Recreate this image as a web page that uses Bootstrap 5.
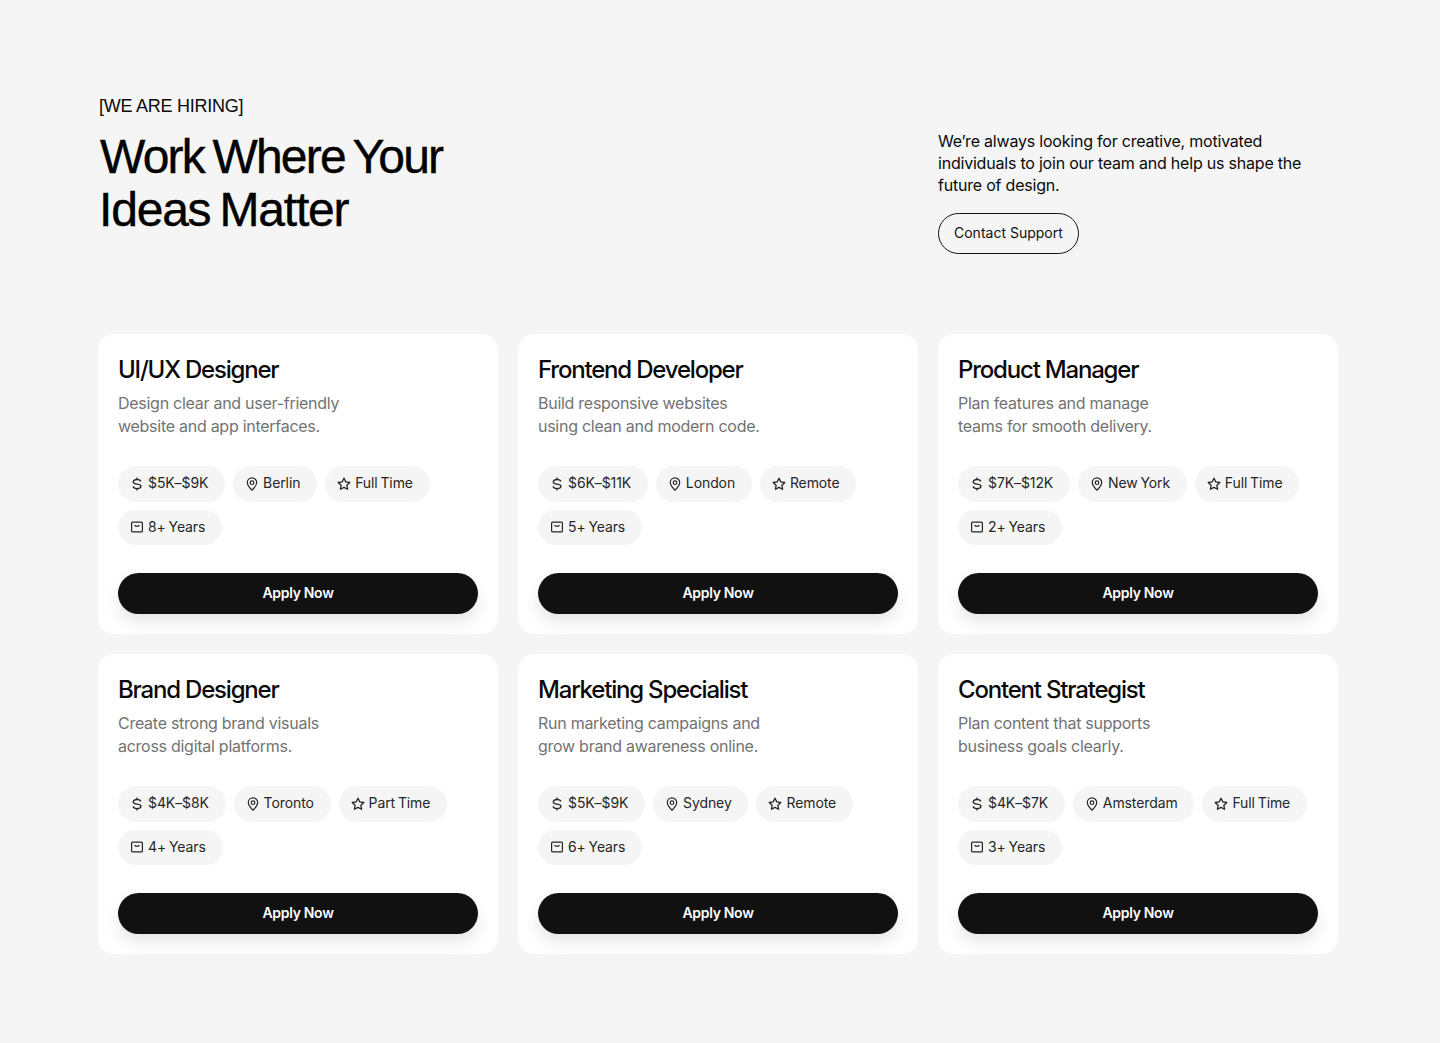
<!DOCTYPE html>
<html lang="en">
<head>
  <meta charset="UTF-8" />
  <meta name="viewport" content="width=device-width, initial-scale=1" />
  <title>Careers</title>
  <link href="https://cdn.jsdelivr.net/npm/bootstrap@5.3.3/dist/css/bootstrap.min.css" rel="stylesheet">
  <style>
    body {
      background-color: #f5f5f5;
      color: #0a0a0a;
      font-family: 'Inter', sans-serif;
    }

    .page-wrap {
      width: 1240px;
      margin-left: 98px;
      padding-top: 95px;
      padding-bottom: 89px;
    }

    .hero-row {
      height: 239px;
    }

    .eyebrow {
      font-family: 'Liberation Sans', sans-serif;
      font-size: 18px;
      line-height: 22px;
      letter-spacing: -0.25px;
      margin-left: 1px;
      margin-bottom: 13px;
    }

    .hero-title {
      font-family: 'Liberation Sans', sans-serif;
      font-size: 48px;
      line-height: 53px;
      font-weight: 400;
      letter-spacing: -1.8px;
      word-spacing: -3px;
      color: #000;
      -webkit-text-stroke: 0.4px #000;
      margin: 0 0 0 2px;
    }

    .hero-title span {
      letter-spacing: -1.2px;
      margin-left: -1px;
    }

    .hero-side {
      width: 400px;
      padding-top: 34.6px;
    }

    .hero-text {
      font-size: 16px;
      line-height: 22.4px;
      letter-spacing: -0.21px;
      width: 380px;
      margin-bottom: 16.4px;
    }

    .contact-btn {
      height: 41px;
      padding: 0 15px 2px;
      border: 1px solid #111;
      border-radius: 999px;
      font-size: 14px;
      color: #111;
      background: transparent;
    }

    .jobs-grid {
      display: grid;
      grid-template-columns: repeat(3, 400px);
      gap: 20px;
    }

    .job-box {
      height: 300px;
      padding: 20px;
      background: #fff;
      border-radius: 16px;
    }

    .job-title {
      font-size: 24px;
      line-height: 32px;
      font-weight: 500;
      letter-spacing: -1.2px;
      color: #0a0a0a;
      margin-bottom: 6px;
    }

    .job-desc {
      font-size: 16px;
      line-height: 23px;
      letter-spacing: -0.27px;
      color: #737373;
      margin-bottom: 28px;
    }

    .tag-list {
      display: flex;
      flex-wrap: wrap;
      gap: 8px;
      height: 99px;
      align-content: flex-start;
    }

    .tag-item {
      display: inline-flex;
      align-items: center;
      height: 35.6px;
      padding: 0 16.8px 2px 12px;
      gap: 4px;
      background: #f5f5f5;
      border-radius: 999px;
      font-size: 14px;
      letter-spacing: -0.1px;
      word-spacing: -1px;
      color: #262626;
    }

    .tag-item svg {
      flex: none;
      margin-top: 2px;
    }

    .apply-btn {
      display: block;
      width: 100%;
      height: 41px;
      margin-top: 8px;
      padding: 0 0 2px;
      border: 0;
      border-radius: 999px;
      background: #111;
      color: #fff;
      font-size: 14px;
      font-weight: 600;
      letter-spacing: -0.3px;
      box-shadow: 0 8px 16px rgba(0, 0, 0, 0.1);
    }
  </style>
</head>
<body>

<svg width="0" height="0" class="position-absolute">
  <symbol id="ic-dollar" viewBox="0 0 14 14">
    <path d="M10.800 4.500C10.500 3.200 9 2.500 7 2.500S3.300 3.300 3.300 4.900C3.300 8.200 10.900 6 10.900 9.300c0 1.500-1.700 2.300-3.900 2.300s-3.600-.8-3.900-2.200M7 .5v2M7 11.500v2" fill="none" stroke="currentColor" stroke-width="1.400"/>
  </symbol>
  <symbol id="ic-pin" viewBox="0 0 14 14">
    <path d="M7 13.200C5 11.200 2.300 8.800 2.300 5.600a4.700 4.700 0 0 1 9.400 0C11.700 8.800 9 11.200 7 13.200Z" fill="none" stroke="currentColor" stroke-width="1.200"/>
    <circle cx="7" cy="5.700" r="1.800" fill="none" stroke="currentColor" stroke-width="1.200"/>
  </symbol>
  <symbol id="ic-star" viewBox="0 0 14 14">
    <path d="M7 1.200 8.800 4.900l4 .6-2.900 2.800.7 4L7 10.400l-3.600 1.900.7-4L1.200 5.500l4-.6Z" fill="none" stroke="currentColor" stroke-width="1.300" stroke-linejoin="round"/>
  </symbol>
  <symbol id="ic-box" viewBox="0 0 14 14">
    <rect x="1.600" y="2.100" width="10.800" height="9.800" rx="1" fill="none" stroke="currentColor" stroke-width="1.200"/>
    <path d="M4.600 5c.5 1.800 4.300 1.800 4.800 0" fill="none" stroke="currentColor" stroke-width="1.200"/>
  </symbol>
</svg>

<main class="page-wrap">
  <section class="hero-row d-flex justify-content-between">
    <div>
      <div class="eyebrow">[WE ARE HIRING]</div>
      <h1 class="hero-title">Work Where Your<br><span>Ideas Matter</span></h1>
    </div>
    <div class="hero-side">
      <p class="hero-text">We’re always looking for creative, motivated individuals to join our team and help us shape the future of design.</p>
      <button class="btn contact-btn">Contact Support</button>
    </div>
  </section>

  <section class="jobs-grid" id="jobs"></section>
</main>

<script>
  const jobs = [
    ['UI/UX Designer', 'Design clear and user-friendly', 'website and app interfaces.', '$5K–$9K', 'Berlin', 'Full Time', '8+ Years'],
    ['Frontend Developer', 'Build responsive websites', 'using clean and modern code.', '$6K–$11K', 'London', 'Remote', '5+ Years'],
    ['Product Manager', 'Plan features and manage', 'teams for smooth delivery.', '$7K–$12K', 'New York', 'Full Time', '2+ Years'],
    ['Brand Designer', 'Create strong brand visuals', 'across digital platforms.', '$4K–$8K', 'Toronto', 'Part Time', '4+ Years'],
    ['Marketing Specialist', 'Run marketing campaigns and', 'grow brand awareness online.', '$5K–$9K', 'Sydney', 'Remote', '6+ Years'],
    ['Content Strategist', 'Plan content that supports', 'business goals clearly.', '$4K–$7K', 'Amsterdam', 'Full Time', '3+ Years']
  ];

  const tag = (icon, text) =>
    `<span class="tag-item"><svg width="14" height="14"><use href="#${icon}"/></svg>${text}</span>`;

  document.getElementById('jobs').innerHTML = jobs.map(j => `
    <article class="job-box">
      <h2 class="job-title">${j[0]}</h2>
      <p class="job-desc">${j[1]}<br>${j[2]}</p>
      <div class="tag-list">
        ${tag('ic-dollar', j[3])}${tag('ic-pin', j[4])}${tag('ic-star', j[5])}${tag('ic-box', j[6])}
      </div>
      <button class="btn apply-btn">Apply Now</button>
    </article>`).join('');
</script>

<script src="https://cdn.jsdelivr.net/npm/bootstrap@5.3.3/dist/js/bootstrap.bundle.min.js"></script>
</body>
</html>
